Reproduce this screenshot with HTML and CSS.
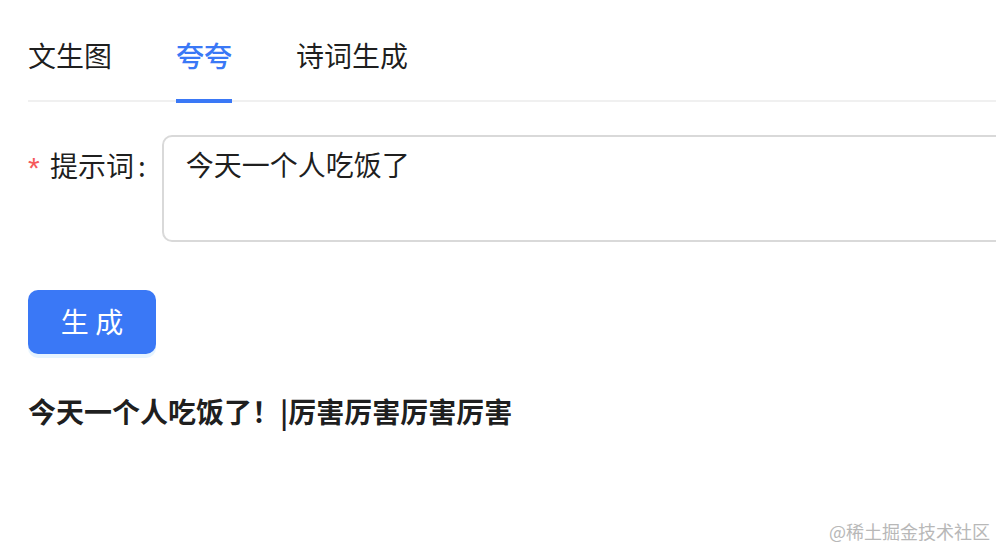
FILE: index.html
```html
<!DOCTYPE html>
<html lang="zh-CN">
<head>
    <meta charset="UTF-8">
    <meta name="viewport" content="width=device-width, initial-scale=1.0">
    <title>夸夸</title>
    <link rel="stylesheet" href="styles.css">
</head>
<body>
    <div class="page">
        <div class="tabs">
            <div class="tab">文生图</div>
            <div class="tab active">夸夸</div>
            <div class="tab">诗词生成</div>
        </div>

        <div class="form-item">
            <label class="form-label" for="prompt"><span class="required">*</span>提示词<span class="colon">:</span></label>
            <textarea id="prompt" class="textarea" rows="2">今天一个人吃饭了</textarea>
        </div>

        <button class="btn-primary">生 成</button>

        <p class="result">今天一个人吃饭了！|厉害厉害厉害厉害</p>
    </div>

    <div class="watermark">@稀土掘金技术社区</div>
</body>
</html>
```

FILE: styles.css
```css
html, body {
    margin: 0;
    padding: 0;
    overflow: hidden;
    background: #fff;
}
body {
    font-family: "Noto Sans CJK SC", "Noto Sans", sans-serif;
    color: rgba(0, 0, 0, 0.88);
    font-size: 28px;
    width: 996px;
    height: 548px;
    position: relative;
}
.page {
    padding: 10px 0 0 28px;
    width: 1010px;
}
.tabs {
    display: flex;
    gap: 64px;
    border-bottom: 2px solid #f0f0f0;
    margin-bottom: 33px;
}
.tab {
    position: relative;
    padding: 24px 0;
    line-height: 42px;
    color: rgba(0, 0, 0, 0.88);
}
.tab.active {
    color: #3a78f6;
    font-weight: 500;
}
.tab.active::after {
    content: "";
    position: absolute;
    left: 0;
    right: 0;
    bottom: -3px;
    height: 4px;
    background: #3a78f6;
}
.form-item {
    display: flex;
    align-items: flex-start;
    margin-bottom: 48px;
}
.form-label {
    display: flex;
    align-items: center;
    height: 60px;
    white-space: nowrap;
}
.required {
    display: inline-block;
    width: 14px;
    margin-right: 8px;
    color: #f5595b;
    font-family: "Liberation Sans", sans-serif;
    font-size: 30px;
    position: relative;
    top: 3px;
}
.colon {
    margin: 0 16px 0 4px;
}
.textarea {
    flex: 1;
    box-sizing: border-box;
    height: 107px;
    padding: 5px 22px;
    border: 2px solid #d9d9d9;
    border-radius: 10px;
    font-family: inherit;
    font-size: 28px;
    line-height: 44px;
    color: rgba(0, 0, 0, 0.88);
    resize: none;
    outline: none;
}
.btn-primary {
    display: block;
    width: 128px;
    height: 64px;
    padding: 0 0 3px;
    border: none;
    border-radius: 10px;
    background: #3a78f6;
    color: #fff;
    font-family: inherit;
    font-size: 28px;
    box-shadow: 0 4px 0 rgba(5, 145, 255, 0.1);
    cursor: pointer;
}
.result {
    margin: 35px 0 0;
    font-weight: 700;
    line-height: 44px;
}
.watermark {
    position: absolute;
    right: 6px;
    bottom: 4px;
    font-size: 18px;
    color: #b8b8b8;
}
```
